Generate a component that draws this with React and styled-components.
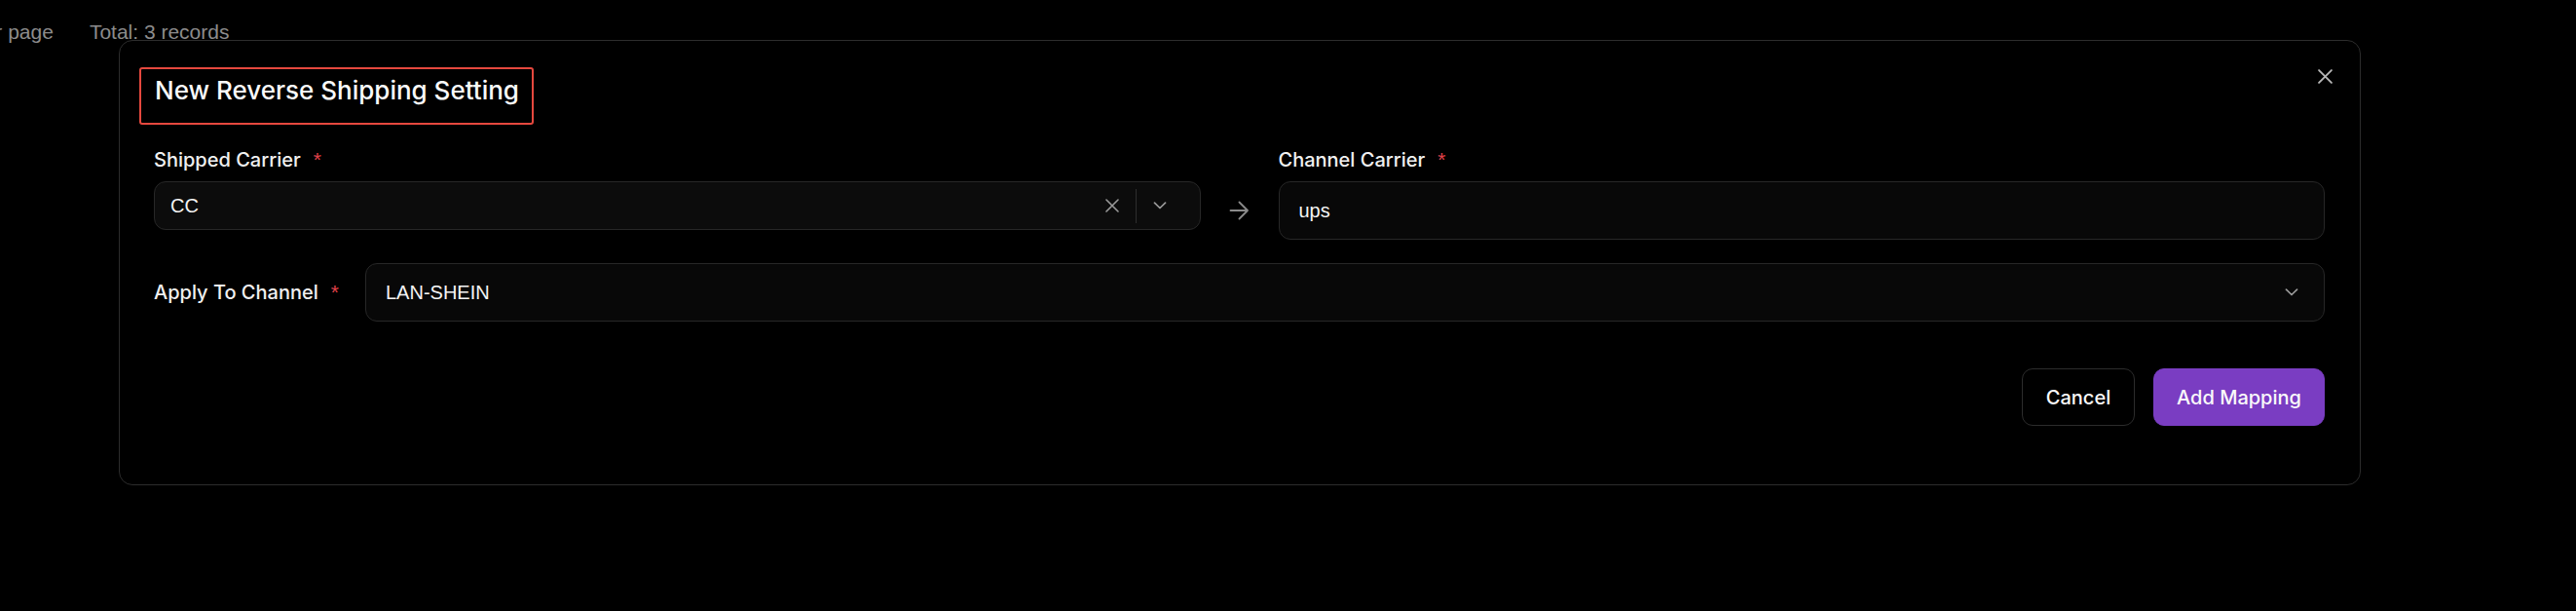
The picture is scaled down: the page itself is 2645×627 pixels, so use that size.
import React from 'react';
import styled, { createGlobalStyle } from 'styled-components';

const GlobalStyle = createGlobalStyle`
  body {
    margin: 0;
    background: #000;
    color: #f2f2f2;
    font-family: Inter, 'Liberation Sans', sans-serif;
  }
`;

const Page = styled('div')`
  width: 2645px;
  height: 627px;
  background: #000;
  overflow: hidden;
`;

const TopBar = styled('div')`
  height: 41px;
  box-sizing: border-box;
  padding-top: 21px;
  display: flex;
  gap: 37px;
  font-family: 'Liberation Sans', Arial, sans-serif;
  font-size: 21px;
  line-height: 24px;
  color: #8c8c8c;
  white-space: nowrap;
`;

const PageSize = styled('span')`
  margin-left: -28px;
`;

const Modal = styled('div')`
  position: relative;
  margin-left: 122px;
  width: 2302px;
  height: 457px;
  box-sizing: border-box;
  border: 1px solid #2c2c2c;
  border-radius: 14px;
  padding: 27px 36px 0 35px;
  background: #000;
`;

const CloseButton = styled('button')`
  position: absolute;
  top: 28px;
  right: 28px;
  width: 16px;
  height: 16px;
  padding: 0;
  border: 0;
  background: transparent;
  display: flex;
  align-items: center;
  justify-content: center;
  color: #b8b8b8;
  cursor: pointer;
`;

const TitleBox = styled('div')`
  width: 405px;
  height: 59px;
  box-sizing: border-box;
  margin-left: -15px;
  padding: 6px 0 0 14px;
  border: 2px solid #e5483e;
  border-radius: 3px;
`;

const Title = styled('h2')`
  margin: 0;
  font-size: 26px;
  line-height: 32px;
  font-weight: 500;
  color: #fafafa;
  white-space: nowrap;
`;

const PairRow = styled('div')`
  margin-top: 22px;
  display: grid;
  grid-template-columns: 1fr 80px 1fr;
  align-items: start;
`;

const Field = styled('div')`
  display: flex;
  flex-direction: column;
  gap: 8px;
`;

const Label = styled('label')`
  display: flex;
  align-items: baseline;
  font-size: 20px;
  line-height: 28px;
  font-weight: 500;
  color: #f0f0f0;
  white-space: nowrap;
`;

const Required = styled('span')`
  margin-left: 13px;
  font-family: 'Liberation Sans', Arial, sans-serif;
  font-size: 21px;
  color: #e0424a;
`;

const ArrowCell = styled('div')`
  margin-top: 36px;
  height: 60px;
  display: flex;
  align-items: center;
  justify-content: center;
  color: #8a8a8a;
`;

const Control = styled('div')`
  height: ${(props) => props.h || 60}px;
  box-sizing: border-box;
  display: flex;
  align-items: center;
  padding-left: ${(props) => props.pl || 20}px;
  border: 1px solid #272727;
  border-radius: 12px;
  background: ${(props) => (props.tone === 'raised' ? '#0c0c0c' : '#080808')};
  font-family: 'Liberation Sans', Arial, sans-serif;
  font-size: 20px;
  color: #f4f4f4;
`;

const Value = styled('span')`
  flex: 1;
  white-space: nowrap;
`;

const Indicators = styled('div')`
  display: flex;
  align-items: center;
  padding-right: ${(props) => props.pr || 26}px;
  color: #9a9a9a;
`;

const Divider = styled('span')`
  width: 1px;
  height: 35px;
  margin: 0 17px;
  background: #2e2e2e;
`;

const ChannelRow = styled('div')`
  margin-top: 24px;
  display: grid;
  grid-template-columns: 217px 1fr;
  align-items: center;
`;

const Footer = styled('div')`
  margin-top: 48px;
  display: flex;
  justify-content: flex-end;
  gap: 19px;
`;

const Button = styled('button')`
  width: ${(props) => (props.primary ? 176 : 116)}px;
  height: 59px;
  box-sizing: border-box;
  padding: 0;
  border-radius: 11px;
  border: 1px solid ${(props) => (props.primary ? '#7a3dc2' : '#2c2c2c')};
  background: ${(props) => (props.primary ? '#7a3dc2' : '#000')};
  color: #fafafa;
  font-family: Inter, sans-serif;
  font-size: 20px;
  font-weight: 500;
  cursor: pointer;
`;

const XIcon = ({ size = 14, stroke = 1.6 }) => (
  <svg width={size} height={size} viewBox="0 0 14 14" fill="none">
    <path d="M1 1L13 13M13 1L1 13" stroke="currentColor" strokeWidth={stroke} strokeLinecap="round" />
  </svg>
);

const Chevron = () => (
  <svg width="14" height="8" viewBox="0 0 14 8" fill="none">
    <path d="M1.5 1.2L7 6.5L12.5 1.2" stroke="currentColor" strokeWidth="1.7" strokeLinecap="round" strokeLinejoin="round" />
  </svg>
);

const ArrowRight = () => (
  <svg width="21" height="20" viewBox="0 0 21 20" fill="none">
    <path d="M1.5 10H19M10.5 1.5L19 10L10.5 18.5" stroke="currentColor" strokeWidth="1.8" strokeLinecap="round" strokeLinejoin="round" />
  </svg>
);

const App = () => (
  <Page>
    <GlobalStyle />
    <TopBar>
      <PageSize>per page</PageSize>
      <span>Total: 3 records</span>
    </TopBar>
    <Modal>
      <CloseButton aria-label="Close">
        <XIcon size={15} stroke={1.7} />
      </CloseButton>
      <TitleBox>
        <Title>New Reverse Shipping Setting</Title>
      </TitleBox>

      <PairRow>
        <Field>
          <Label>
            Shipped Carrier<Required>*</Required>
          </Label>
          <Control h={50} pl={16} tone="raised">
            <Value>CC</Value>
            <Indicators pr={34}>
              <XIcon />
              <Divider />
              <Chevron />
            </Indicators>
          </Control>
        </Field>
        <ArrowCell>
          <ArrowRight />
        </ArrowCell>
        <Field>
          <Label>
            Channel Carrier<Required>*</Required>
          </Label>
          <Control>
            <Value>ups</Value>
          </Control>
        </Field>
      </PairRow>

      <ChannelRow>
        <Label>
          Apply To Channel<Required>*</Required>
        </Label>
        <Control>
          <Value>LAN-SHEIN</Value>
          <Indicators pr={26}>
            <Chevron />
          </Indicators>
        </Control>
      </ChannelRow>

      <Footer>
        <Button>Cancel</Button>
        <Button primary>Add Mapping</Button>
      </Footer>
    </Modal>
  </Page>
);

export default App;
